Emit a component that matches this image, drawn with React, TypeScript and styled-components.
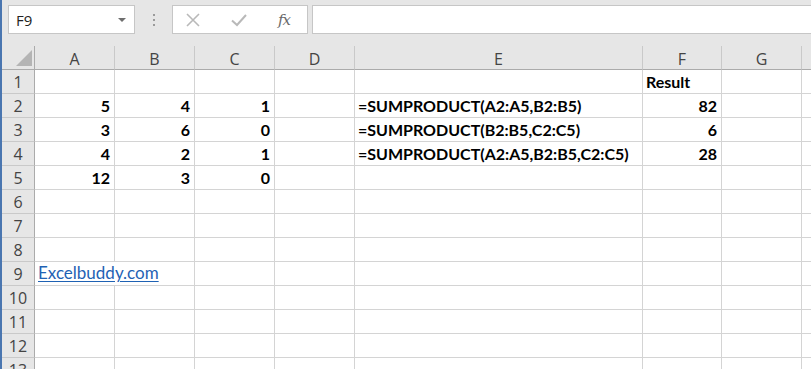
import React from "react";
import styled, { createGlobalStyle, css } from "styled-components";

const GlobalStyle = createGlobalStyle`
  html, body {
    margin: 0;
    padding: 0;
    background: #ffffff;
  }
`;

const columns = [
  { key: "A", width: 80 },
  { key: "B", width: 80 },
  { key: "C", width: 80 },
  { key: "D", width: 80 },
  { key: "E", width: 288 },
  { key: "F", width: 79 },
  { key: "G", width: 80 },
  { key: "H", width: 80 },
];

type CellData = { text: string; align?: "left" | "right"; link?: boolean; span?: number };
type RowData = Record<string, CellData>;

const rows: RowData[] = [
  { F: { text: "Result", align: "left" } },
  {
    A: { text: "5" },
    B: { text: "4" },
    C: { text: "1" },
    E: { text: "=SUMPRODUCT(A2:A5,B2:B5)", align: "left" },
    F: { text: "82" },
  },
  {
    A: { text: "3" },
    B: { text: "6" },
    C: { text: "0" },
    E: { text: "=SUMPRODUCT(B2:B5,C2:C5)", align: "left" },
    F: { text: "6" },
  },
  {
    A: { text: "4" },
    B: { text: "2" },
    C: { text: "1" },
    E: { text: "=SUMPRODUCT(A2:A5,B2:B5,C2:C5)", align: "left" },
    F: { text: "28" },
  },
  { A: { text: "12" }, B: { text: "3" }, C: { text: "0" } },
  {},
  {},
  {},
  { A: { text: "Excelbuddy.com", align: "left", link: true, span: 2 } },
  {},
  {},
  {},
  {},
];

const Window = styled.div`
  width: 811px;
  height: 369px;
  overflow: hidden;
  box-sizing: border-box;
  border-left: 2px solid #4a76b0;
  background: #e6e6e6;
  display: flex;
  flex-direction: column;
`;

/* formula bar */
const FormulaBar = styled.div`
  height: 46px;
  flex: none;
  box-sizing: border-box;
  padding: 5px 0 0 6px;
  display: flex;
  align-items: flex-start;
`;

const NameBox = styled.div`
  width: 127px;
  height: 29px;
  box-sizing: border-box;
  background: #ffffff;
  border: 1px solid #c6c6c6;
  display: flex;
  align-items: center;
  justify-content: space-between;
  padding: 0 8px 0 7px;
  font-family: "Open Sans", sans-serif;
  font-size: 15px;
  color: #222;
`;

const DropArrow = styled.span`
  width: 0;
  height: 0;
  border-left: 4px solid transparent;
  border-right: 4px solid transparent;
  border-top: 4px solid #6e6e6e;
`;

const Splitter = styled.div`
  width: 37px;
  height: 29px;
  display: flex;
  flex-direction: column;
  align-items: center;
  justify-content: center;
  gap: 3px;
`;

const Dot = styled.span`
  width: 2px;
  height: 2px;
  background: #9a9a9a;
`;

const FxGroup = styled.div`
  width: 136px;
  height: 29px;
  box-sizing: border-box;
  background: #ffffff;
  border: 1px solid #c6c6c6;
  display: flex;
  align-items: center;
  padding-left: 13px;
  gap: 31px;
`;

const FxLabel = styled.span`
  font-family: "DejaVu Serif", "Liberation Serif", serif;
  font-style: italic;
  font-size: 15px;
  color: #6a6a6a;
  letter-spacing: -1px;
`;

const FormulaInput = styled.div`
  flex: 1;
  margin-left: 4px;
  height: 29px;
  box-sizing: border-box;
  background: #ffffff;
  border: 1px solid #c6c6c6;
  border-right: none;
`;

/* sheet */
const Sheet = styled.div`
  display: grid;
  grid-template-columns: 33px ${columns.map((c) => `${c.width}px`).join(" ")};
  grid-auto-rows: 24px;
  background: #ffffff;
`;

const headerFont = css`
  font-family: "Open Sans", sans-serif;
  font-size: 16px;
  color: #444444;
`;

const Corner = styled.div`
  background: #e6e6e6;
  border-right: 1px solid #ababab;
  border-bottom: 1px solid #ababab;
  box-sizing: border-box;
  display: flex;
  align-items: flex-end;
  justify-content: flex-end;
  padding: 0 2px 3px 0;
`;

const CornerTriangle = styled.span`
  width: 16px;
  height: 16px;
  background: #b4b4b4;
  clip-path: polygon(100% 0, 100% 100%, 0 100%);
`;

const ColHeader = styled.div`
  ${headerFont}
  background: #e6e6e6;
  box-sizing: border-box;
  border-right: 1px solid #c9c9c9;
  border-bottom: 1px solid #ababab;
  display: flex;
  align-items: center;
  justify-content: center;
  padding-top: 3px;
`;

const RowHeader = styled.div`
  ${headerFont}
  background: #e6e6e6;
  box-sizing: border-box;
  border-right: 1px solid #ababab;
  border-bottom: 1px solid #c9c9c9;
  display: flex;
  align-items: center;
  justify-content: center;
  padding-top: 1px;
`;

const Cell = styled.div<{ $align: "left" | "right"; $span: number; $link: boolean }>`
  grid-column: span ${(p) => p.$span};
  box-sizing: border-box;
  border-right: 1px solid #d4d4d4;
  border-bottom: 1px solid #d4d4d4;
  display: flex;
  align-items: flex-end;
  justify-content: ${(p) => (p.$align === "left" ? "flex-start" : "flex-end")};
  padding: 0 4px 2px 3px;
  white-space: nowrap;
  overflow: hidden;
  font-family: Lato, "Open Sans", sans-serif;
  font-size: ${(p) => (p.$link ? 17 : 16)}px;
  font-weight: ${(p) => (p.$link ? 400 : 700)};
  color: ${(p) => (p.$link ? "#1f62b4" : "#000000")};
  text-decoration: ${(p) => (p.$link ? "underline" : "none")};
  text-underline-offset: 2px;
`;

const CancelIcon = () => (
  <svg width="14" height="14" viewBox="0 0 14 14">
    <path d="M1 1 L13 13 M13 1 L1 13" stroke="#b9b9b9" strokeWidth="1.6" fill="none" />
  </svg>
);

const EnterIcon = () => (
  <svg width="16" height="14" viewBox="0 0 16 14">
    <path d="M1 7.5 L6 12 L15 2" stroke="#b9b9b9" strokeWidth="2" fill="none" />
  </svg>
);

const App = () => {
  return (
    <>
      <GlobalStyle />
      <Window>
        <FormulaBar>
          <NameBox>
            F9
            <DropArrow />
          </NameBox>
          <Splitter>
            <Dot />
            <Dot />
            <Dot />
          </Splitter>
          <FxGroup>
            <CancelIcon />
            <EnterIcon />
            <FxLabel>fx</FxLabel>
          </FxGroup>
          <FormulaInput />
        </FormulaBar>
        <Sheet>
          <Corner>
            <CornerTriangle />
          </Corner>
          {columns.map((c) => (
            <ColHeader key={c.key}>{c.key === "H" ? "" : c.key}</ColHeader>
          ))}
          {rows.map((row, i) => {
            const cells: React.ReactNode[] = [];
            let skip = 0;
            columns.forEach((c) => {
              if (skip > 0) {
                skip--;
                return;
              }
              const d = row[c.key];
              const span = d?.span ?? 1;
              skip = span - 1;
              cells.push(
                <Cell
                  key={c.key}
                  $align={d?.align ?? "right"}
                  $span={span}
                  $link={!!d?.link}
                >
                  {d?.text}
                </Cell>
              );
            });
            return (
              <React.Fragment key={i}>
                <RowHeader>{i + 1}</RowHeader>
                {cells}
              </React.Fragment>
            );
          })}
        </Sheet>
      </Window>
    </>
  );
};

export default App;
